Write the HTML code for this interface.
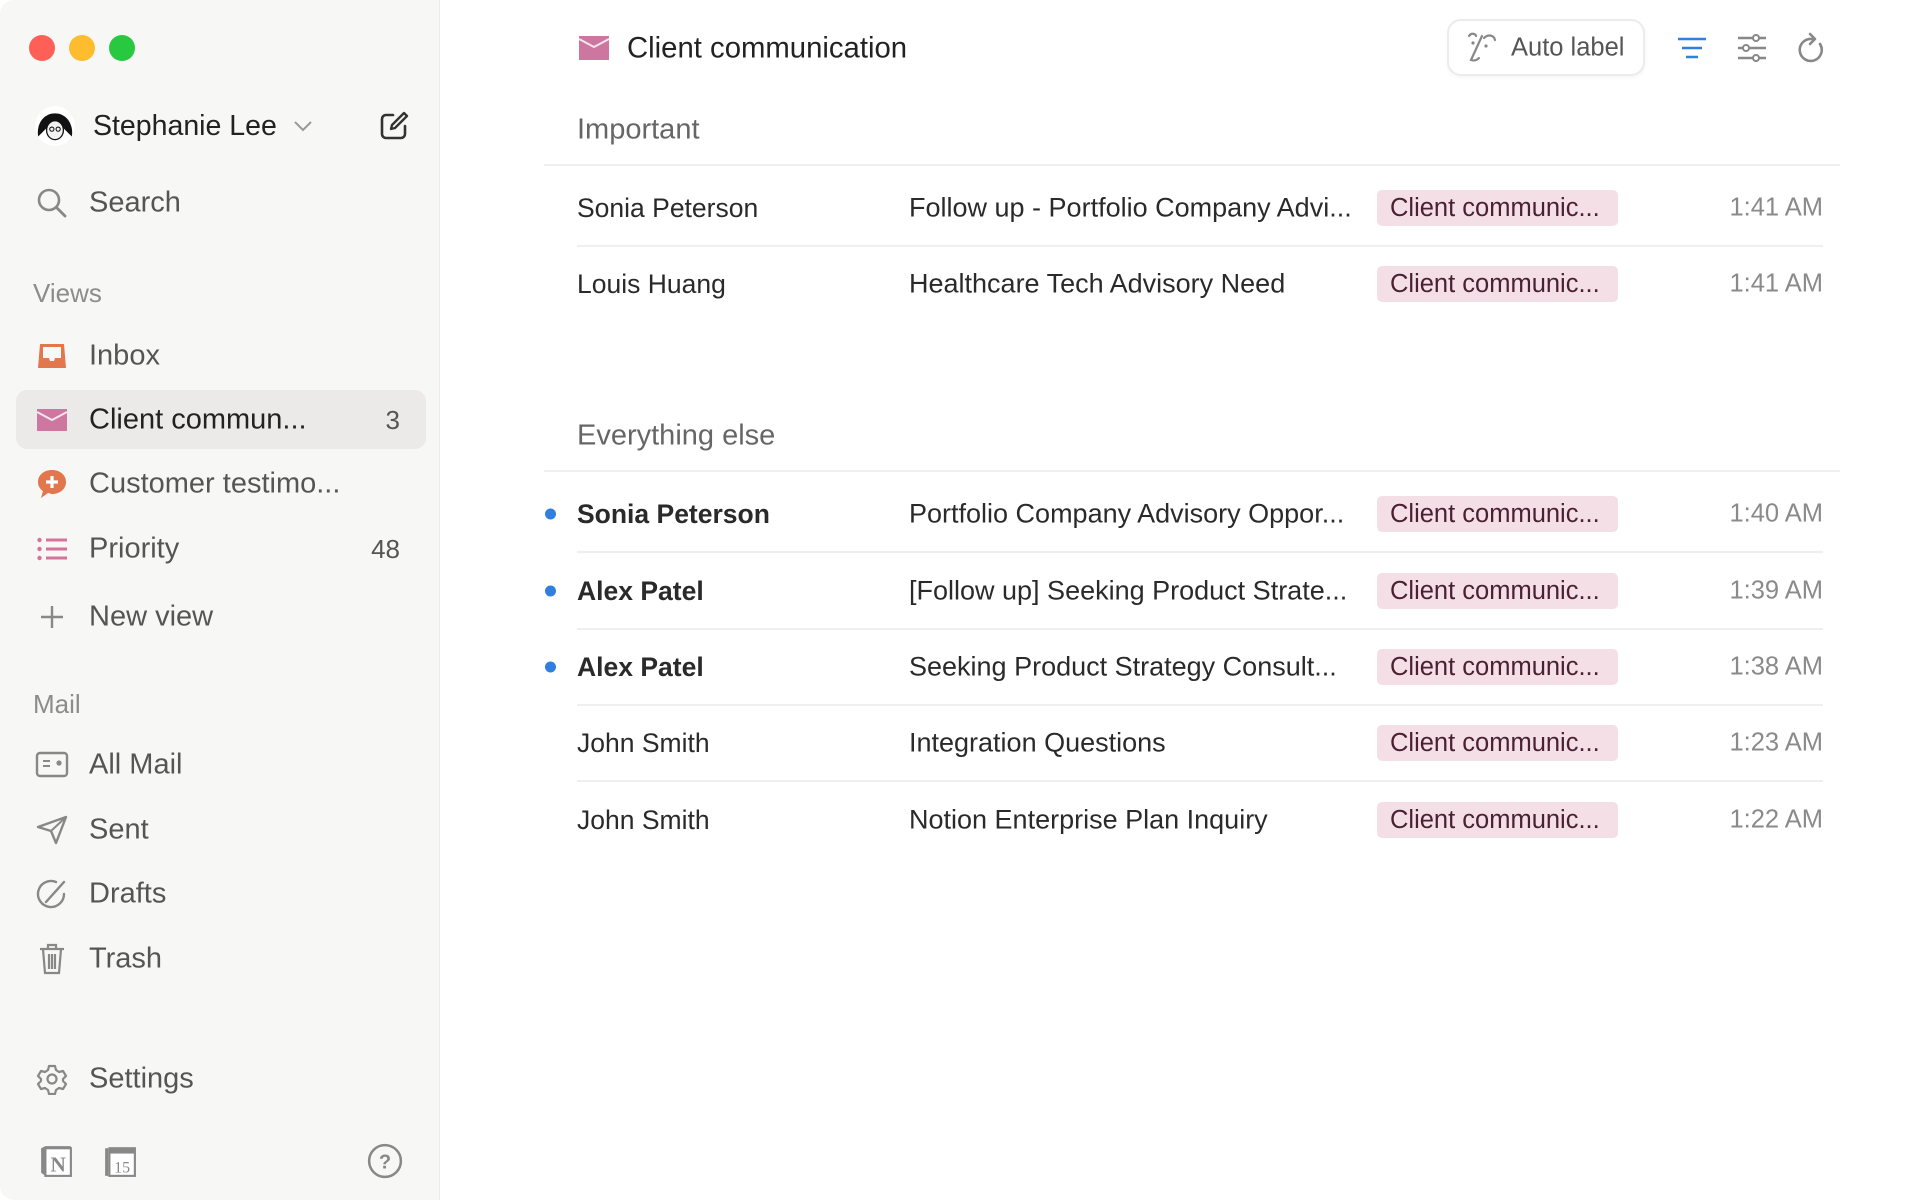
<!DOCTYPE html>
<html><head><meta charset="utf-8"><style>
*{margin:0;padding:0;box-sizing:border-box}
body{width:1920px;height:1200px;background:#fff;font-family:"Liberation Sans",sans-serif;position:relative;overflow:hidden;color:#222}
.sb{position:absolute;left:0;top:0;width:440px;height:1200px;background:#f7f7f5;border-right:1px solid #ebebea;border-radius:14px 0 0 14px}
.a{position:absolute;white-space:nowrap}
.t{position:absolute;transform:translateY(-50%);white-space:nowrap;line-height:1}
.si{font-size:29px;color:#555;left:89px}
.ico{position:absolute;transform:translate(-50%,-50%)}
.hd{font-size:26px;color:#8c8c8c;left:33px}
.sender{left:577px;font-size:26.5px;color:#2a2a2a}
.subj{left:909px;font-size:27px;color:#2a2a2a}
.b{font-weight:bold}
.tag{position:absolute;left:1377px;width:241px;height:36px;background:#f4dfe7;border-radius:5px;color:#4a2131;font-size:25.5px;line-height:36px;padding-left:13px;transform:translateY(-50%)}
.time{right:97px;font-size:25.5px;color:#8a8a8a}
.line{position:absolute;height:2px;background:#efefef}
.dot{position:absolute;width:11px;height:11px;border-radius:50%;background:#2f7fe0;left:545px;transform:translateY(-50%)}
</style></head><body>
<div class="sb"></div>
<div class="a" style="left:29px;top:35px;width:26px;height:26px;border-radius:50%;background:#fe5f57"></div>
<div class="a" style="left:69px;top:35px;width:26px;height:26px;border-radius:50%;background:#febc2e"></div>
<div class="a" style="left:109px;top:35px;width:26px;height:26px;border-radius:50%;background:#28c840"></div>

<svg class="ico" style="left:55px;top:126px" width="42" height="42" viewBox="0 0 40 40"><circle cx="20" cy="20" r="19" fill="#fff"/><path d="M4 30 C2 20 8 8 20 8 C32 8 38 20 36 30 C32 26 30 24 28 22 L12 22 C10 24 8 26 4 30Z" fill="#111"/><ellipse cx="20" cy="24" rx="8" ry="9" fill="#f2f2f2" stroke="#111" stroke-width="1.2"/><circle cx="17" cy="23" r="2" fill="none" stroke="#111"/><circle cx="23" cy="23" r="2" fill="none" stroke="#111"/></svg>
<div class="t" style="left:93px;top:126px;font-size:28.5px;color:#222">Stephanie Lee</div>
<svg class="ico" style="left:303px;top:126px" width="20" height="12" viewBox="0 0 20 12"><path d="M2 2l8 8 8-8" fill="none" stroke="#999" stroke-width="2"/></svg>
<svg class="ico" style="left:394px;top:126px" width="32" height="32" viewBox="0 0 32 32"><path d="M15 5H8a4 4 0 0 0-4 4v15a4 4 0 0 0 4 4h15a4 4 0 0 0 4-4v-8" fill="none" stroke="#333" stroke-width="2.6" stroke-linecap="round"/><path d="M13 19l1-4L26 3l3 3-12 12z" fill="none" stroke="#333" stroke-width="2.4" stroke-linejoin="round"/></svg>

<svg class="ico" style="left:52px;top:203px" width="32" height="32" viewBox="0 0 32 32"><circle cx="13" cy="13" r="10" fill="none" stroke="#888" stroke-width="2.6"/><path d="M20.5 20.5L29 29" stroke="#888" stroke-width="2.8" stroke-linecap="round"/></svg>
<div class="t si" style="top:203px">Search</div>

<div class="t hd" style="top:293px">Views</div>
<svg class="ico" style="left:52px;top:356px" width="30" height="26" viewBox="0 0 30 26"><path d="M3 1h24l2 24H1z" fill="#e2764c"/><path d="M6 4h18v11h-6l-1 3h-4l-1-3H6z" fill="#f7f7f5"/></svg>
<div class="t si" style="top:356px">Inbox</div>

<div class="a" style="left:16px;top:390px;width:410px;height:59px;background:#ebeae8;border-radius:11px"></div>
<svg class="ico" style="left:52px;top:420px" width="30" height="22" viewBox="0 0 30 22"><rect width="30" height="22" fill="#cd77a0"/><path d="M0 3l15 8 15-8" fill="none" stroke="#f5e6ee" stroke-width="2"/></svg>
<div class="t si" style="top:420px;color:#222">Client commun...</div>
<div class="t" style="right:1520px;top:420px;font-size:26px;color:#555">3</div>

<svg class="ico" style="left:52px;top:484px" width="32" height="30" viewBox="0 0 32 30"><path d="M16 1C8 1 2 6 2 13c0 4 2 7 5 9l-2 7 7-5c1 0 3 1 4 1 8 0 14-5 14-12S24 1 16 1z" fill="#e2764c"/><path d="M16 7v12M10 13h12" stroke="#fff" stroke-width="3.2"/></svg>
<div class="t si" style="top:484px">Customer testimo...</div>

<svg class="ico" style="left:52px;top:549px" width="30" height="24" viewBox="0 0 30 24"><g fill="#d6739c"><circle cx="2.5" cy="3" r="2.2"/><circle cx="2.5" cy="12" r="2.2"/><circle cx="2.5" cy="21" r="2.2"/><rect x="9" y="1.5" width="21" height="3"/><rect x="9" y="10.5" width="21" height="3"/><rect x="9" y="19.5" width="21" height="3"/></g></svg>
<div class="t si" style="top:549px">Priority</div>
<div class="t" style="right:1520px;top:549px;font-size:26px;color:#555">48</div>

<svg class="ico" style="left:52px;top:617px" width="26" height="26" viewBox="0 0 26 26"><path d="M13 2v22M2 13h22" stroke="#888" stroke-width="2.4"/></svg>
<div class="t si" style="top:617px">New view</div>

<div class="t hd" style="top:704px">Mail</div>
<svg class="ico" style="left:52px;top:765px" width="34" height="28" viewBox="0 0 34 28"><rect x="2" y="2" width="30" height="23" rx="3" fill="none" stroke="#888" stroke-width="2.4"/><path d="M8 10h7M8 15h7" stroke="#888" stroke-width="2"/><circle cx="24" cy="12" r="2.6" fill="#888"/></svg>
<div class="t si" style="top:765px">All Mail</div>
<svg class="ico" style="left:52px;top:830px" width="32" height="30" viewBox="0 0 32 30"><path d="M2 12L30 2 20 28 15 16z" fill="none" stroke="#888" stroke-width="2.4" stroke-linejoin="round"/><path d="M15 16L30 2" stroke="#888" stroke-width="2"/></svg>
<div class="t si" style="top:830px">Sent</div>
<svg class="ico" style="left:52px;top:894px" width="32" height="32" viewBox="0 0 32 32"><path d="M20 4A13 13 0 1 0 28 16" fill="none" stroke="#888" stroke-width="2.4" stroke-linecap="round"/><path d="M10 24l18-20" stroke="#888" stroke-width="2.4" stroke-linecap="round"/></svg>
<div class="t si" style="top:894px">Drafts</div>
<svg class="ico" style="left:52px;top:959px" width="28" height="32" viewBox="0 0 28 32"><path d="M2 6h24M10 6V2h8v4M5 6l2 24h14l2-24M11 11v15M14 11v15M17 11v15" fill="none" stroke="#888" stroke-width="2.2"/></svg>
<div class="t si" style="top:959px">Trash</div>

<svg class="ico" style="left:52px;top:1079px" width="32" height="32" viewBox="0 0 32 32"><path d="M13 3h6l1 4 3 2 4-1 3 5-3 3v2l3 3-3 5-4-1-3 2-1 4h-6l-1-4-3-2-4 1-3-5 3-3v-2L2 13l3-5 4 1 3-2z" fill="none" stroke="#888" stroke-width="2.2" stroke-linejoin="round"/><circle cx="16" cy="16" r="4.5" fill="none" stroke="#888" stroke-width="2.2"/></svg>
<div class="t si" style="top:1079px">Settings</div>

<svg class="ico" style="left:56px;top:1161px" width="34" height="34" viewBox="0 0 32 32"><path d="M2 4l4-2h24v28H6l-4-3z" fill="#888"/><rect x="6" y="4" width="24" height="26" fill="#fff" stroke="#888" stroke-width="2"/><text x="18" y="26" font-family="Liberation Serif" font-weight="bold" font-size="20" fill="#888" text-anchor="middle">N</text></svg>
<svg class="ico" style="left:120px;top:1161px" width="34" height="34" viewBox="0 0 32 32"><path d="M2 4h3v26H2z" fill="#888"/><rect x="6" y="4" width="24" height="26" fill="#fff" stroke="#888" stroke-width="2"/><rect x="6" y="4" width="24" height="5" fill="#888"/><text x="18" y="27" font-family="Liberation Serif" font-size="15" fill="#888" text-anchor="middle">15</text></svg>
<svg class="ico" style="left:385px;top:1161px" width="36" height="36" viewBox="0 0 34 34"><circle cx="17" cy="17" r="15" fill="none" stroke="#888" stroke-width="2.4"/><text x="17" y="24" font-family="Liberation Sans" font-size="19" font-weight="bold" fill="#888" text-anchor="middle">?</text></svg>

<!-- main -->
<svg class="ico" style="left:594px;top:48px" width="30" height="24" viewBox="0 0 30 24"><rect width="30" height="24" fill="#cd77a0"/><path d="M0 3l15 8 15-8" fill="none" stroke="#f5e6ee" stroke-width="2"/></svg>
<div class="t" style="left:627px;top:48px;font-size:29.3px;color:#222">Client communication</div>

<div class="a" style="left:1447px;top:19px;width:198px;height:57px;border:2px solid #ececec;border-radius:14px;background:#fff;box-shadow:0 2px 4px rgba(0,0,0,0.04)"></div>
<svg class="ico" style="left:1482px;top:48px" width="30" height="32" viewBox="0 0 30 32"><path d="M2 4c2-3 6-3 7 0M17 6c4-4 10-3 11 2M15 4L4 28c3 1 6 0 8-2" fill="none" stroke="#888" stroke-width="2.2" stroke-linecap="round"/><circle cx="6" cy="11" r="1.6" fill="#888"/><circle cx="19" cy="14" r="1.6" fill="#888"/></svg>
<div class="t" style="left:1511px;top:48px;font-size:25.5px;color:#555">Auto label</div>

<svg class="ico" style="left:1692px;top:48px" width="30" height="22" viewBox="0 0 30 22"><path d="M1 2h28M5 11h20M9 20h12" stroke="#2f7fe0" stroke-width="2.6"/></svg>
<svg class="ico" style="left:1752px;top:48px" width="32" height="28" viewBox="0 0 32 28"><path d="M2 4h28M2 14h28M2 24h28" stroke="#888" stroke-width="2.4"/><circle cx="20" cy="4" r="3" fill="#fff" stroke="#888" stroke-width="2"/><circle cx="10" cy="14" r="3" fill="#fff" stroke="#888" stroke-width="2"/><circle cx="20" cy="24" r="3" fill="#fff" stroke="#888" stroke-width="2"/></svg>
<svg class="ico" style="left:1812px;top:48px" width="28" height="32" viewBox="0 0 28 32"><path d="M22 12A11 11 0 1 1 14 7" fill="none" stroke="#888" stroke-width="2.6" stroke-linecap="round"/><path d="M12 2l5 5-5 5" fill="none" stroke="#888" stroke-width="2.6" stroke-linecap="round" stroke-linejoin="round"/></svg>

<div class="t" style="left:577px;top:130px;font-size:29px;color:#666">Important</div>
<div class="line" style="left:544px;top:164px;width:1296px"></div>

<div class="t sender" style="top:208px">Sonia Peterson</div>
<div class="t subj" style="top:208px">Follow up - Portfolio Company Advi...</div>
<div class="tag" style="top:208px">Client communic...</div>
<div class="t time" style="top:208px">1:41 AM</div>
<div class="line" style="left:577px;top:245px;width:1246px"></div>
<div class="t sender" style="top:284px">Louis Huang</div>
<div class="t subj" style="top:284px">Healthcare Tech Advisory Need</div>
<div class="tag" style="top:284px">Client communic...</div>
<div class="t time" style="top:284px">1:41 AM</div>

<div class="t" style="left:577px;top:436px;font-size:29px;color:#666">Everything else</div>
<div class="line" style="left:544px;top:470px;width:1296px"></div>

<div class="dot" style="top:514px"></div>
<div class="t sender b" style="top:514px">Sonia Peterson</div>
<div class="t subj" style="top:514px">Portfolio Company Advisory Oppor...</div>
<div class="tag" style="top:514px">Client communic...</div>
<div class="t time" style="top:514px">1:40 AM</div>
<div class="line" style="left:577px;top:551px;width:1246px"></div>

<div class="dot" style="top:591px"></div>
<div class="t sender b" style="top:591px">Alex Patel</div>
<div class="t subj" style="top:591px">[Follow up] Seeking Product Strate...</div>
<div class="tag" style="top:591px">Client communic...</div>
<div class="t time" style="top:591px">1:39 AM</div>
<div class="line" style="left:577px;top:628px;width:1246px"></div>

<div class="dot" style="top:667px"></div>
<div class="t sender b" style="top:667px">Alex Patel</div>
<div class="t subj" style="top:667px">Seeking Product Strategy Consult...</div>
<div class="tag" style="top:667px">Client communic...</div>
<div class="t time" style="top:667px">1:38 AM</div>
<div class="line" style="left:577px;top:704px;width:1246px"></div>

<div class="t sender" style="top:743px">John Smith</div>
<div class="t subj" style="top:743px">Integration Questions</div>
<div class="tag" style="top:743px">Client communic...</div>
<div class="t time" style="top:743px">1:23 AM</div>
<div class="line" style="left:577px;top:780px;width:1246px"></div>

<div class="t sender" style="top:820px">John Smith</div>
<div class="t subj" style="top:820px">Notion Enterprise Plan Inquiry</div>
<div class="tag" style="top:820px">Client communic...</div>
<div class="t time" style="top:820px">1:22 AM</div>
</body></html>
